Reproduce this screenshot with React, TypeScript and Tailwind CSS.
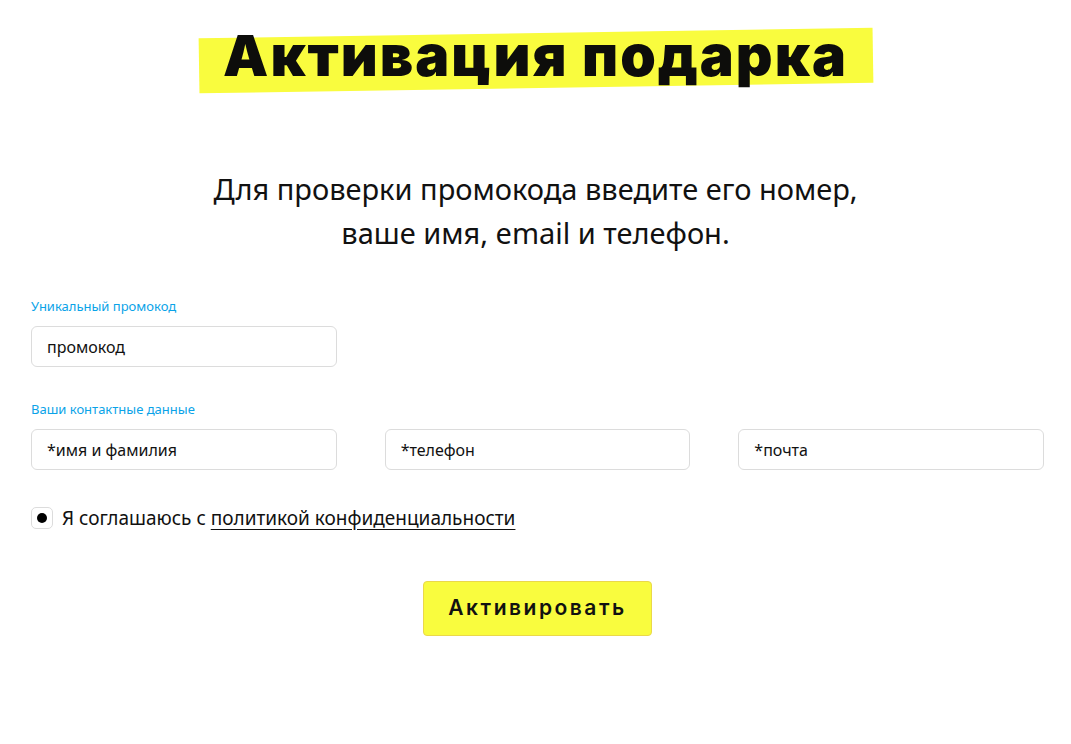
import React from 'react';

const Field = ({ placeholder }: { placeholder: string }) => (
    <div className="h-[41px] w-[306px] rounded-[6px] border border-[#dcdcdc] bg-white flex items-center px-[15px] text-[16px] text-[#111]">
        {placeholder}
    </div>
);

export default function App() {
    return (
        <div className="min-h-[744px] bg-white font-['Noto_Sans',sans-serif] text-black">
            {/* Title with tilted marker */}
            <div className="flex justify-center pt-[27px]">
                <div className="relative w-[674px] h-[66px] flex justify-center">
                    <div className="absolute left-0 top-[6px] w-[674px] h-[55px] bg-[#f9fc3e] -rotate-[0.9deg]" />
                    <h1 className="relative font-['Inter',sans-serif] font-black text-[57px] leading-[60px] tracking-[2px] text-[#0d0d0b] mt-[-1px]">
                        Активация подарка
                    </h1>
                </div>
            </div>

            <p className="mt-[74px] text-center text-[29px] leading-[44px] text-[#111]">
                Для проверки промокода введите его номер,
                <br />
                ваше имя, email и телефон.
            </p>

            <div className="mx-auto w-[1013px] mt-[42px] translate-x-[2px]">
                <div className="text-[13px] text-[#0aa3e8] leading-[18px]">Уникальный промокод</div>
                <div className="mt-[11px]">
                    <Field placeholder="промокод" />
                </div>

                <div className="mt-[33px] text-[13px] text-[#0aa3e8] leading-[18px]">Ваши контактные данные</div>
                <div className="mt-[11px] flex gap-[48px]">
                    <Field placeholder="*имя и фамилия" />
                    <Field placeholder="*телефон" />
                    <Field placeholder="*почта" />
                </div>

                <div className="mt-[34px] flex items-center gap-[9px]">
                    <div className="w-[22px] h-[22px] rounded-[5px] border border-[#dcdcdc] flex items-center justify-center">
                        <div className="w-[10px] h-[10px] rounded-full bg-black" />
                    </div>
                    <span className="text-[19px] text-[#111]">
                        Я соглашаюсь с{' '}
                        <span className="underline underline-offset-[4px]">политикой конфиденциальности</span>
                    </span>
                </div>

                <div className="mt-[48px] flex justify-center">
                    <button className="w-[229px] h-[55px] rounded-[4px] bg-[#f9fc3e] border border-[#ead84a] font-['Inter',sans-serif] font-semibold text-[21px] tracking-[2.5px] text-[#111]">
                        Активировать
                    </button>
                </div>
            </div>
        </div>
    );
}
